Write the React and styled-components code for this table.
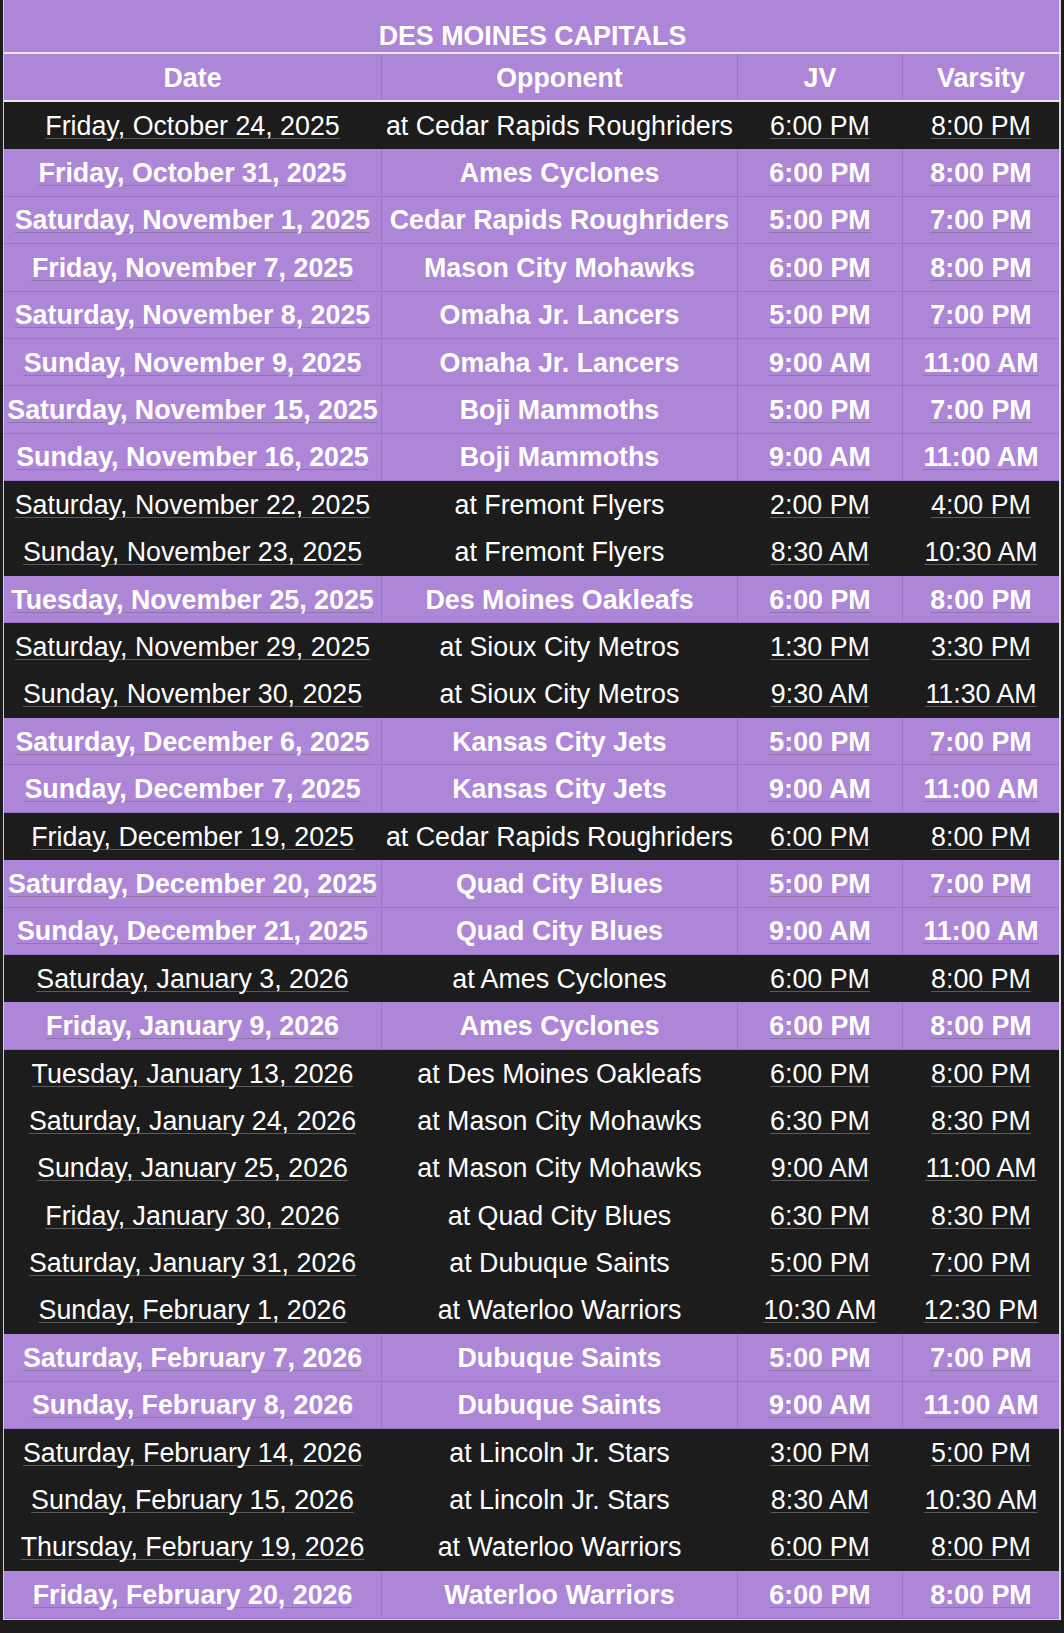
import React from "react";
import styled, { createGlobalStyle, css } from "styled-components";

const Global = createGlobalStyle`
  html, body { margin: 0; padding: 0; background: #1c1c1c; }
  body { font-family: "Liberation Sans", Arial, Helvetica, sans-serif; }
`;

const PURPLE = "#ae86d7";
const LINE = "#9c73c5";
const DARK = "#1c1c1c";

const games = [
  ["Friday, October 24, 2025", "at Cedar Rapids Roughriders", "6:00 PM", "8:00 PM"],
  ["Friday, October 31, 2025", "Ames Cyclones", "6:00 PM", "8:00 PM"],
  ["Saturday, November 1, 2025", "Cedar Rapids Roughriders", "5:00 PM", "7:00 PM"],
  ["Friday, November 7, 2025", "Mason City Mohawks", "6:00 PM", "8:00 PM"],
  ["Saturday, November 8, 2025", "Omaha Jr. Lancers", "5:00 PM", "7:00 PM"],
  ["Sunday, November 9, 2025", "Omaha Jr. Lancers", "9:00 AM", "11:00 AM"],
  ["Saturday, November 15, 2025", "Boji Mammoths", "5:00 PM", "7:00 PM"],
  ["Sunday, November 16, 2025", "Boji Mammoths", "9:00 AM", "11:00 AM"],
  ["Saturday, November 22, 2025", "at Fremont Flyers", "2:00 PM", "4:00 PM"],
  ["Sunday, November 23, 2025", "at Fremont Flyers", "8:30 AM", "10:30 AM"],
  ["Tuesday, November 25, 2025", "Des Moines Oakleafs", "6:00 PM", "8:00 PM"],
  ["Saturday, November 29, 2025", "at Sioux City Metros", "1:30 PM", "3:30 PM"],
  ["Sunday, November 30, 2025", "at Sioux City Metros", "9:30 AM", "11:30 AM"],
  ["Saturday, December 6, 2025", "Kansas City Jets", "5:00 PM", "7:00 PM"],
  ["Sunday, December 7, 2025", "Kansas City Jets", "9:00 AM", "11:00 AM"],
  ["Friday, December 19, 2025", "at Cedar Rapids Roughriders", "6:00 PM", "8:00 PM"],
  ["Saturday, December 20, 2025", "Quad City Blues", "5:00 PM", "7:00 PM"],
  ["Sunday, December 21, 2025", "Quad City Blues", "9:00 AM", "11:00 AM"],
  ["Saturday, January 3, 2026", "at Ames Cyclones", "6:00 PM", "8:00 PM"],
  ["Friday, January 9, 2026", "Ames Cyclones", "6:00 PM", "8:00 PM"],
  ["Tuesday, January 13, 2026", "at Des Moines Oakleafs", "6:00 PM", "8:00 PM"],
  ["Saturday, January 24, 2026", "at Mason City Mohawks", "6:30 PM", "8:30 PM"],
  ["Sunday, January 25, 2026", "at Mason City Mohawks", "9:00 AM", "11:00 AM"],
  ["Friday, January 30, 2026", "at Quad City Blues", "6:30 PM", "8:30 PM"],
  ["Saturday, January 31, 2026", "at Dubuque Saints", "5:00 PM", "7:00 PM"],
  ["Sunday, February 1, 2026", "at Waterloo Warriors", "10:30 AM", "12:30 PM"],
  ["Saturday, February 7, 2026", "Dubuque Saints", "5:00 PM", "7:00 PM"],
  ["Sunday, February 8, 2026", "Dubuque Saints", "9:00 AM", "11:00 AM"],
  ["Saturday, February 14, 2026", "at Lincoln Jr. Stars", "3:00 PM", "5:00 PM"],
  ["Sunday, February 15, 2026", "at Lincoln Jr. Stars", "8:30 AM", "10:30 AM"],
  ["Thursday, February 19, 2026", "at Waterloo Warriors", "6:00 PM", "8:00 PM"],
  ["Friday, February 20, 2026", "Waterloo Warriors", "6:00 PM", "8:00 PM"],
];

const Schedule = styled.div`
  margin-left: 3px;
  width: 1055px;
  border-left: 1px solid #cfcfcf;
  border-right: 2px solid #d9d9d9;
  border-bottom: 1px solid #d4d4d4;
  background: ${PURPLE};
  color: #fff;
  font-size: 26.8px;
`;

const Title = styled.div`
  height: 54px;
  box-sizing: border-box;
  padding-top: 21px;
  line-height: 30px;
  text-align: center;
  font-weight: 700;
  border-bottom: 2px solid #ece6f3;
  margin-right: -2px;
`;

const grid = css`
  display: grid;
  grid-template-columns: 377px 356px 165px 157px;
`;

const HeaderRow = styled.div`
  ${grid};
  height: 48px;
  box-sizing: border-box;
  border-bottom: 2px solid #ece6f3;
  margin-right: -2px;
  padding-right: 2px;
`;

const HeadCell = styled.div`
  display: flex;
  align-items: center;
  justify-content: center;
  font-weight: 700;
  white-space: nowrap;
  padding-top: 2px;
  &:not(:first-child) { border-left: 1px solid ${LINE}; }
`;

const Row = styled.div`
  ${grid};
  height: 47.406px;
  box-sizing: border-box;
  background: ${(p) => (p.$away ? DARK : PURPLE)};
  font-weight: ${(p) => (p.$away ? 400 : 700)};
  border-bottom: 1px solid ${(p) => (p.$away ? DARK : LINE)};
`;

const Cell = styled.div`
  display: flex;
  align-items: center;
  justify-content: center;
  white-space: nowrap;
  overflow: visible;
  padding-top: 2px;
  &:not(:first-child) {
    border-left: 1px solid ${(p) => (p.$away ? "transparent" : LINE)};
  }
`;

const Detected = styled.span`
  text-decoration: underline;
  text-decoration-thickness: 1px;
  text-underline-offset: 3px;
  text-decoration-color: ${(p) =>
    p.$away ? "rgba(255,255,255,0.28)" : "rgba(110,100,125,0.5)"};
`;

export default function App() {
  return (
    <>
      <Global />
      <Schedule>
        <Title>DES MOINES CAPITALS</Title>
        <HeaderRow>
          <HeadCell>Date</HeadCell>
          <HeadCell>Opponent</HeadCell>
          <HeadCell>JV</HeadCell>
          <HeadCell>Varsity</HeadCell>
        </HeaderRow>
        {games.map(([date, opp, jv, varsity]) => {
          const away = opp.startsWith("at ");
          return (
            <Row key={date} $away={away}>
              <Cell $away={away}>
                <Detected $away={away}>{date}</Detected>
              </Cell>
              <Cell $away={away}>{opp}</Cell>
              <Cell $away={away}>
                <Detected $away={away}>{jv}</Detected>
              </Cell>
              <Cell $away={away}>
                <Detected $away={away}>{varsity}</Detected>
              </Cell>
            </Row>
          );
        })}
      </Schedule>
    </>
  );
}
